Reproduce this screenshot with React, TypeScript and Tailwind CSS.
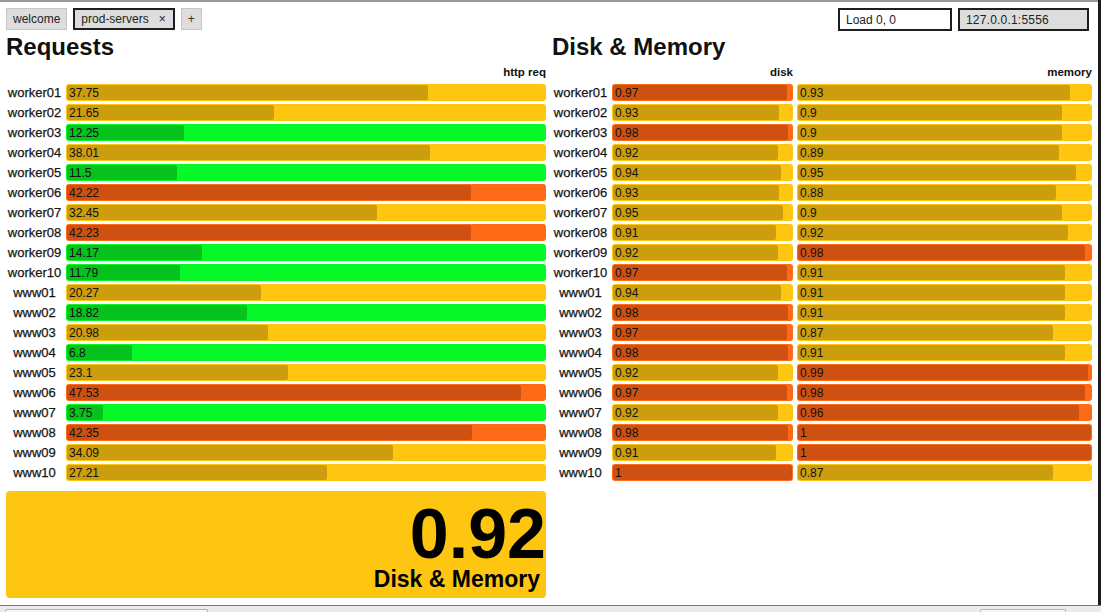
import React from 'react';

const hosts = [
  'worker01', 'worker02', 'worker03', 'worker04', 'worker05',
  'worker06', 'worker07', 'worker08', 'worker09', 'worker10',
  'www01', 'www02', 'www03', 'www04', 'www05',
  'www06', 'www07', 'www08', 'www09', 'www10',
];

const requests = [37.75, 21.65, 12.25, 38.01, 11.5, 42.22, 32.45, 42.23, 14.17, 11.79, 20.27, 18.82, 20.98, 6.8, 23.1, 47.53, 3.75, 42.35, 34.09, 27.21];
const disk = [0.97, 0.93, 0.98, 0.92, 0.94, 0.93, 0.95, 0.91, 0.92, 0.97, 0.94, 0.98, 0.97, 0.98, 0.92, 0.97, 0.92, 0.98, 0.91, 1];
const memory = [0.93, 0.9, 0.9, 0.89, 0.95, 0.88, 0.9, 0.92, 0.98, 0.91, 0.91, 0.91, 0.87, 0.91, 0.99, 0.98, 0.96, 1, 1, 0.87];

type State = 'ok' | 'warning' | 'critical';

const outer: Record<State, string> = {
  ok: 'bg-[#06f926]',
  warning: 'bg-[#fec611]',
  critical: 'bg-[#ff6a16]',
};

const inner: Record<State, string> = {
  ok: 'bg-[#07c11d]',
  warning: 'bg-[#cc9e0d]',
  critical: 'bg-[#ce5111]',
};

function reqState(v: number): State {
  if (v > 40) return 'critical';
  if (v >= 20) return 'warning';
  return 'ok';
}

function loadState(v: number): State {
  return v > 0.95 ? 'critical' : 'warning';
}

function Bar({ value, max, state, width }: { value: number; max: number; state: State; width: string }) {
  const pct = Math.min(100, (value / max) * 100);
  return (
    <div className={`${width} h-[17px] rounded-[3px] p-[1px] ${outer[state]}`}>
      <div
        className={`h-full rounded-[2px] ${inner[state]} flex items-center whitespace-nowrap overflow-visible`}
        style={{ width: `${pct}%` }}
      >
        <span className="pl-[2px] text-[12px] leading-none text-[#111]">{value}</span>
      </div>
    </div>
  );
}

function Label({ name }: { name: string }) {
  return (
    <div className="w-[57px] mr-[3px] text-center text-[13px] leading-[17px] text-[#161616] whitespace-nowrap [-webkit-text-stroke:0.25px_#161616]">
      {name}
    </div>
  );
}

export default function App() {
  return (
    <div className="w-[1101px] h-[612px] flex flex-col bg-white overflow-hidden font-['Liberation_Sans',Arial,sans-serif]">
      <div className="flex flex-1 min-h-0">
        <div className="flex-1 flex flex-col">
          <div className="h-[2px] bg-[#9a9a9a]" />

          {/* Tab bar */}
          <div className="flex items-start px-[6px] pt-[6px] h-[29px]">
            <div className="flex gap-[6px]">
              <div className="h-[22px] px-[6px] flex items-center bg-[#dddddd] border border-[#c6c6c6] text-[12px] text-[#222]">
                welcome
              </div>
              <div className="h-[22px] pl-[6px] pr-[7px] flex items-center gap-[10px] bg-[#dddddd] border-2 border-[#1e1e1e] text-[12px] text-[#222]">
                <span>prod-servers</span>
                <span className="text-[12px]">×</span>
              </div>
              <div className="h-[22px] w-[21px] flex items-center justify-center bg-[#dddddd] border border-[#c6c6c6] text-[12px] text-[#333]">
                +
              </div>
            </div>
            <div className="ml-auto flex gap-[6px] pr-[3px]">
              <div className="h-[23px] w-[114px] px-[6px] flex items-center bg-white border-2 border-[#1e1e1e] text-[12px] text-[#222]">
                Load 0, 0
              </div>
              <div className="h-[23px] w-[131px] px-[6px] flex items-center bg-[#dddddd] border-2 border-[#1e1e1e] text-[12px] text-[#222] tracking-[0.2px]">
                127.0.0.1:5556
              </div>
            </div>
          </div>

          {/* Panels */}
          <div className="flex gap-[6px] px-[6px]">
            {/* Requests */}
            <div className="w-[540px] flex flex-col">
              <h1 className="mt-[2px] h-[28px] leading-[28px] text-[24px] font-bold text-[#111]">Requests</h1>
              <div className="mt-[4px] h-[14px] flex">
                <div className="w-[60px]" />
                <div className="flex-1 text-right text-[11.5px] leading-[14px] font-bold text-[#111]">http req</div>
              </div>
              <div className="mt-[5px] flex flex-col gap-[3px]">
                {hosts.map((h, i) => (
                  <div key={h} className="flex items-center">
                    <Label name={h} />
                    <Bar value={requests[i]} max={50} state={reqState(requests[i])} width="w-[480px]" />
                  </div>
                ))}
              </div>
              <div className="mt-[10px] h-[107px] rounded-[4px] bg-[#fec611] flex flex-col items-end justify-end pb-[8px]">
                <div className="text-[70px] leading-[58px] font-bold text-black">0.92</div>
                <div className="mt-[5px] pr-[6px] text-[23px] leading-[22px] font-bold text-black">Disk &amp; Memory</div>
              </div>
            </div>

            {/* Disk & Memory */}
            <div className="w-[540px] flex flex-col">
              <h1 className="mt-[2px] h-[28px] leading-[28px] text-[24px] font-bold text-[#111]">Disk &amp; Memory</h1>
              <div className="mt-[4px] h-[14px] flex text-[11.5px] leading-[14px] font-bold text-[#111]">
                <div className="w-[60px]" />
                <div className="w-[181px] text-right">disk</div>
                <div className="w-[4px]" />
                <div className="w-[295px] text-right">memory</div>
              </div>
              <div className="mt-[5px] flex flex-col gap-[3px]">
                {hosts.map((h, i) => (
                  <div key={h} className="flex items-center">
                    <Label name={h} />
                    <Bar value={disk[i]} max={1} state={loadState(disk[i])} width="w-[181px]" />
                    <div className="w-[4px]" />
                    <Bar value={memory[i]} max={1} state={loadState(memory[i])} width="w-[295px]" />
                  </div>
                ))}
              </div>
            </div>
          </div>
        </div>
        <div className="w-[5px] bg-[#1a1a1a]" />
      </div>

      {/* Bottom strip */}
      <div className="h-[7px] border-t border-[#7a7a7a] bg-[#ebebeb] flex items-end">
        <div className="ml-[5px] w-[203px] h-[3px] bg-[#f7f7f7] border-t border-x border-[#b4b4b4] rounded-t-[2px]" />
        <div className="ml-[772px] w-[86px] h-[3px] bg-[#f7f7f7] border-t border-x border-[#b4b4b4] rounded-t-[2px]" />
      </div>
    </div>
  );
}
